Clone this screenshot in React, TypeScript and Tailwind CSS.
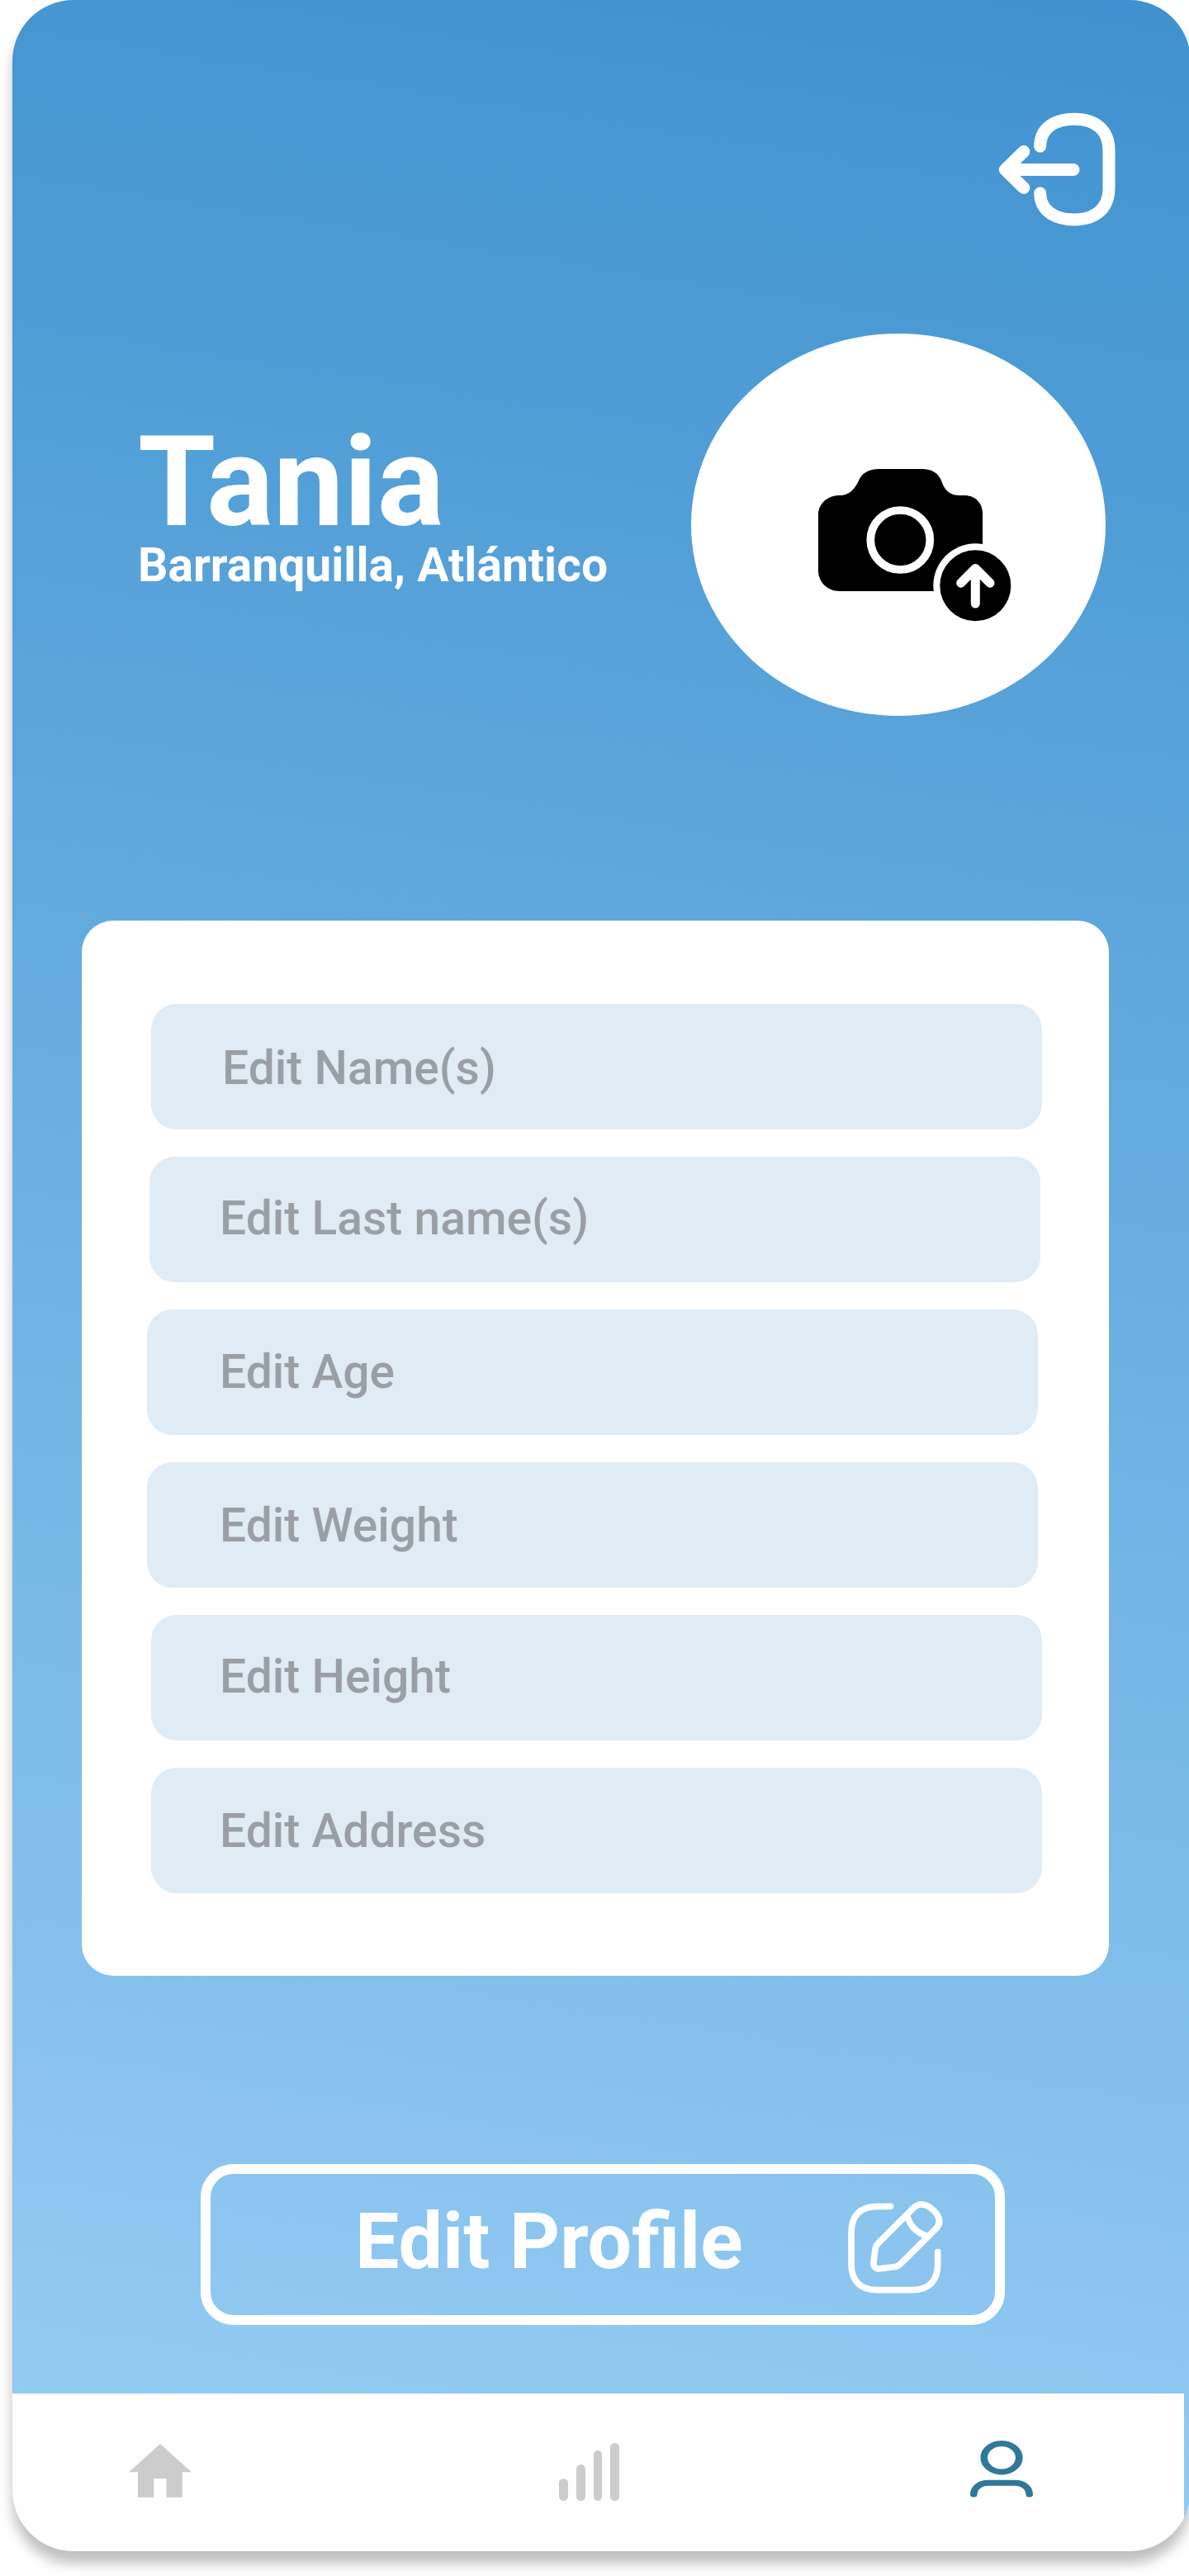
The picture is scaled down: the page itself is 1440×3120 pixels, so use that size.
import type { SVGProps } from "react";

function LogoutIcon(props: SVGProps<SVGSVGElement>) {
  return (
    <svg viewBox="0 0 150 146" fill="none" stroke="currentColor" strokeWidth={15} strokeLinecap="round" strokeLinejoin="round" {...props}>
      <path d="M54.7 45.3C54.7 25 70 12.2 96 12.2C124 12.2 138 27.5 138 50V96C138 118.5 124 134 96 134C70 134 54.7 121 54.7 102" />
      <path d="M95 73.5H12.3M34.8 51.6L12.3 73.5L34.8 95.5" />
    </svg>
  );
}

function CameraIcon(props: SVGProps<SVGSVGElement>) {
  return (
    <svg viewBox="0 0 236 188" fill="none" strokeLinecap="round" strokeLinejoin="round" {...props}>
      <path
        fill="#000"
        d="M26 33C37 33 44 26 49 15C53 6 61 1 74 1H125C138 1 145 6 149 15C153 27 159 33 172 33H177C190 33 199 42 199 55V149H26C11 149 0 138 0 124V57C0 43 11 33 26 33Z"
      />
      <circle cx="99.3" cy="87" r="36" stroke="#fff" strokeWidth={9.7} />
      <circle cx="190.3" cy="142.3" r="51" fill="#fff" />
      <circle cx="190.3" cy="142.3" r="43" fill="#000" />
      <path d="M190.3 164V121.5M172.7 139.2L190.3 121.5L208 139.2" stroke="#fff" strokeWidth={11} />
    </svg>
  );
}

function EditIcon(props: SVGProps<SVGSVGElement>) {
  return (
    <svg viewBox="0 0 116 114" fill="none" stroke="currentColor" strokeWidth={7.7} strokeLinecap="round" strokeLinejoin="round" {...props}>
      <path d="M51.5 7.3H36C15 7.3 4 18 4 39V77C4 98 15 108.7 36 108.7H77C98 108.7 108.7 98 108.7 77V62.5" />
      <path d="M79 9.5L36 52.5Q33.5 55 33 59L31 75Q30.5 83.5 39 82.8L57 80.5Q60.5 80 63 77.5L106 35C112.5 28.5 112 21 104 12.5C95 3.5 86 2.5 79 9.5Z" />
      <path d="M72 19.5C75 31 84 40 95.5 43" />
    </svg>
  );
}

function HomeIcon(props: SVGProps<SVGSVGElement>) {
  return (
    <svg viewBox="0 0 76 65" fill="currentColor" {...props}>
      <path d="M38 0L76 34.3H64.7V64.8H45.5V42H30.3V64.8H11V34.3H0Z" />
    </svg>
  );
}

function UserIcon(props: SVGProps<SVGSVGElement>) {
  return (
    <svg viewBox="0 0 68 76" preserveAspectRatio="none" fill="none" stroke="currentColor" strokeWidth={7} strokeLinecap="round" {...props}>
      <circle cx="34" cy="24.7" r="17.2" />
      <path d="M6.7 69A13.7 13.7 0 0 1 20.4 55.3H47.6A13.7 13.7 0 0 1 61.3 69" />
    </svg>
  );
}

const fields = [
  { label: "Edit Name(s)", box: "ml-[84px] pl-[86px]", text: "mt-[2px]" },
  { label: "Edit Last name(s)", box: "ml-[82px] pl-[85px]", text: "-mt-[1px]" },
  { label: "Edit Age", box: "ml-[79px] pl-[88px]", text: "mt-0" },
  { label: "Edit Weight", box: "ml-[79px] pl-[88px]", text: "mt-[1px]" },
  { label: "Edit Height", box: "ml-[84px] pl-[83px]", text: "-mt-[1px]" },
  { label: "Edit Address", box: "ml-[84px] pl-[83px]", text: "mt-[1px]" },
];

export default function App() {
  return (
    <div className="h-[3120px] w-[1440px] overflow-hidden bg-white pl-[15px] font-['Roboto',sans-serif]">
      <main className="flex h-[3089.5px] w-[1427px] flex-col overflow-hidden rounded-[74px] bg-[linear-gradient(189deg,#3f92cf,#99cef5)] shadow-[0_15px_15px_rgba(0,0,0,0.25)]">
        <header className="flex h-[404px] shrink-0 justify-end pt-[132px] pr-[87px]">
          <button aria-label="Log out" className="h-[146px] w-[150px] text-white">
            <LogoutIcon className="h-[146px] w-[150px]" />
          </button>
        </header>

        <section className="flex h-[463px] shrink-0 justify-between pr-[103px] pl-[152px] text-white">
          <div className="pt-[108px] font-bold whitespace-nowrap">
            <h1 className="text-[152px] leading-[144px]">Tania</h1>
            <p className="text-[57px] leading-[57px]">Barranquilla, Atlántico</p>
          </div>
          <div className="h-[463px] w-[502px] rounded-[50%] bg-white pt-[163px] pl-[154px]">
            <CameraIcon className="h-[188px] w-[236px]" />
          </div>
        </section>

        <form className="mt-[248px] ml-[84px] flex h-[1278px] w-[1244px] shrink-0 flex-col gap-[33px] rounded-[38px] bg-white pt-[101px]">
          {fields.map((f) => (
            <label key={f.label} className={`flex h-[152px] w-[1079px] shrink-0 rounded-[31px] bg-[#dfecf6] ${f.box}`}>
              <span className={`text-[57px] leading-[152px] font-medium whitespace-nowrap text-[#9a9fa6] ${f.text}`}>{f.label}</span>
            </label>
          ))}
        </form>

        <button className="mt-[228px] ml-[228px] flex h-[195px] w-[974px] shrink-0 items-start rounded-[40px] border-[12px] border-white pt-[34px] pl-[175px] text-white">
          <span className="w-[597px] shrink-0 text-left text-[95px] leading-[95px] font-bold whitespace-nowrap">Edit Profile</span>
          <EditIcon className="-mt-[2px] h-[114px] w-[116px] shrink-0" />
        </button>

        <nav className="mt-[83px] flex h-[191px] w-[1419px] shrink-0 items-start bg-[#fefefe] text-[#cccccc]">
          <HomeIcon className="mt-[61px] ml-[141px] h-[65px] w-[76px]" />
          <div className="mt-[60px] ml-[445px] flex h-[70px] items-end gap-[10px]">
            <span className="h-[27px] w-[10.8px] rounded-full bg-current" />
            <span className="h-[44px] w-[10.8px] rounded-full bg-current" />
            <span className="h-[61px] w-[10.8px] rounded-full bg-current" />
            <span className="h-[70px] w-[10.8px] rounded-full bg-current" />
          </div>
          <UserIcon className="mt-[53px] ml-[421px] h-[76px] w-[84px] text-[#307898]" />
        </nav>
      </main>
    </div>
  );
}
